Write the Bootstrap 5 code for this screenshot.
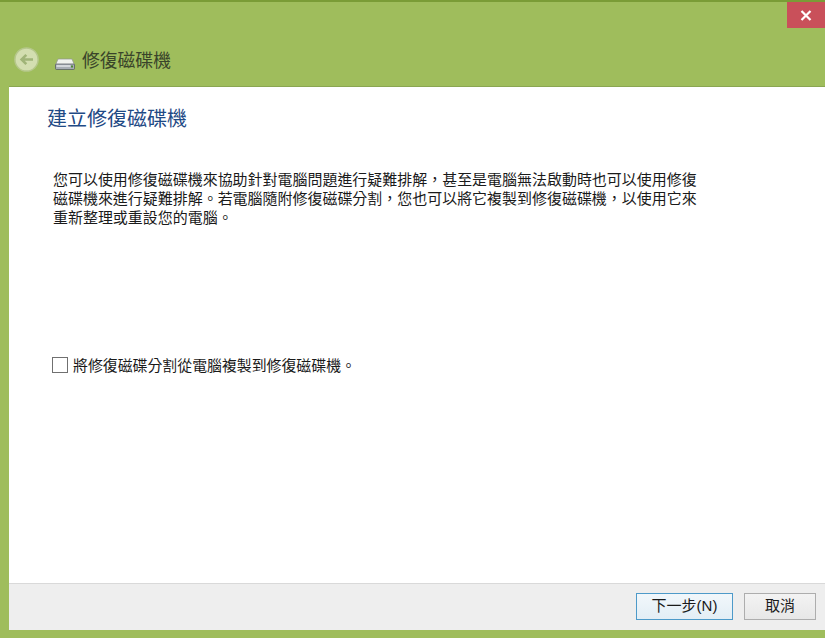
<!DOCTYPE html>
<html lang="zh-Hant">
<head>
<meta charset="utf-8">
<title>修復磁碟機</title>
<link href="https://cdn.jsdelivr.net/npm/bootstrap@5.3.0/dist/css/bootstrap.min.css" rel="stylesheet">
<style>
html,body{height:100%;overflow:hidden}
body{background:#9fbd5c;font-family:"Noto Sans CJK TC",sans-serif;color:#1f1f1f;}
.wiz-window{height:638px;width:825px;border-top:2px solid #7a9c36;padding:0 0 8px 9px;position:relative}
.wiz-close{position:absolute;top:0;right:0;width:38px;height:26px;background:#c9505a;border:0;padding:0}
.wiz-head{height:84px;padding:0 0 14px 5px;flex:none}
.wiz-back{width:25px;height:25px;flex:none}
.wiz-drive{width:20px;height:12px;margin:5px 7px 2px 16px;flex:none}
.wiz-title{font-size:17.8px;line-height:26px;color:#39442a}
.wiz-panel{border-top:1px solid #8aa652;background:#fff;min-height:0}
.wiz-main{padding:16px 0 0 39px}
.wiz-heading{font-size:20px;line-height:30px;font-weight:400;color:#1f4a85;margin:0 0 0 -1px}
.wiz-copy{font-size:14.97px;line-height:19px;width:650px;margin:36px 0 0 5px;color:#1a1a1a}
.wiz-check{margin:129px 0 0 4px;gap:5px;font-size:14.9px;line-height:20px;color:#1a1a1a}
.wiz-box{width:16px;height:16px;border:1px solid #707070;background:#fff;border-radius:0;margin:0;flex:none;appearance:none}
.wiz-foot{height:47px;flex:none;background:#eeeeee;border-top:1px solid #d9d9d9;padding:9px 9px 0 0;gap:11px}
.wiz-btn{height:27px;border-radius:0;padding:0 0 2px;font-size:15px;line-height:23px;color:#1a1a1a;font-family:"Liberation Sans","Noto Sans CJK TC",sans-serif;background:linear-gradient(#f3f3f3,#e7e7e7);border:1px solid #adadad}
.wiz-next{width:97px;border:1px solid #4d9ac9;background:linear-gradient(#f1f7fb,#e3eef5)}
.wiz-cancel{width:72px}
</style>
</head>
<body>
<div class="wiz-window d-flex flex-column">
  <button class="wiz-close d-flex align-items-center justify-content-center" aria-label="關閉">
    <svg width="12" height="11" viewBox="0 0 12 11"><path d="M1.5 1 10.5 10M10.5 1 1.5 10" stroke="#fff" stroke-width="2.2" fill="none"/></svg>
  </button>
  <div class="wiz-head d-flex align-items-end">
    <svg class="wiz-back" viewBox="0 0 25 25">
      <circle cx="12.5" cy="12.5" r="11.6" fill="#d3deb0" stroke="#b5c78a" stroke-width="1.5"/>
      <path d="M19 12.5H8M12.3 7.8 7.6 12.5 12.3 17.2" fill="none" stroke="#a0b478" stroke-width="2.6"/>
    </svg>
    <svg class="wiz-drive" viewBox="0 0 20 12">
      <path d="M3 1h14l2.5 6H.5z" fill="#f0f2ee" stroke="#8f948d" stroke-width=".7"/>
      <rect x=".5" y="6" width="19" height="5.5" rx="1" fill="#a7adb4" stroke="#4f545a" stroke-width=".7"/>
      <rect x="1.5" y="7" width="14" height="2" fill="#d3d7db"/>
      <rect x="16" y="7.5" width="2" height="2" fill="#4f8a36"/>
    </svg>
    <div class="wiz-title">修復磁碟機</div>
  </div>
  <div class="wiz-panel flex-grow-1 d-flex flex-column">
    <main class="wiz-main flex-grow-1">
      <h1 class="wiz-heading">建立修復磁碟機</h1>
      <p class="wiz-copy">您可以使用修復磁碟機來協助針對電腦問題進行疑難排解，甚至是電腦無法啟動時也可以使用修復磁碟機來進行疑難排解。若電腦隨附修復磁碟分割，您也可以將它複製到修復磁碟機，以使用它來重新整理或重設您的電腦。</p>
      <label class="wiz-check d-flex align-items-center">
        <input class="wiz-box" type="checkbox">
        <span>將修復磁碟分割從電腦複製到修復磁碟機。</span>
      </label>
    </main>
    <footer class="wiz-foot d-flex justify-content-end align-items-start">
      <button class="btn wiz-btn wiz-next">下一步(N)</button>
      <button class="btn wiz-btn wiz-cancel">取消</button>
    </footer>
  </div>
</div>
<script src="https://cdn.jsdelivr.net/npm/bootstrap@5.3.0/dist/js/bootstrap.bundle.min.js"></script>
</body>
</html>
